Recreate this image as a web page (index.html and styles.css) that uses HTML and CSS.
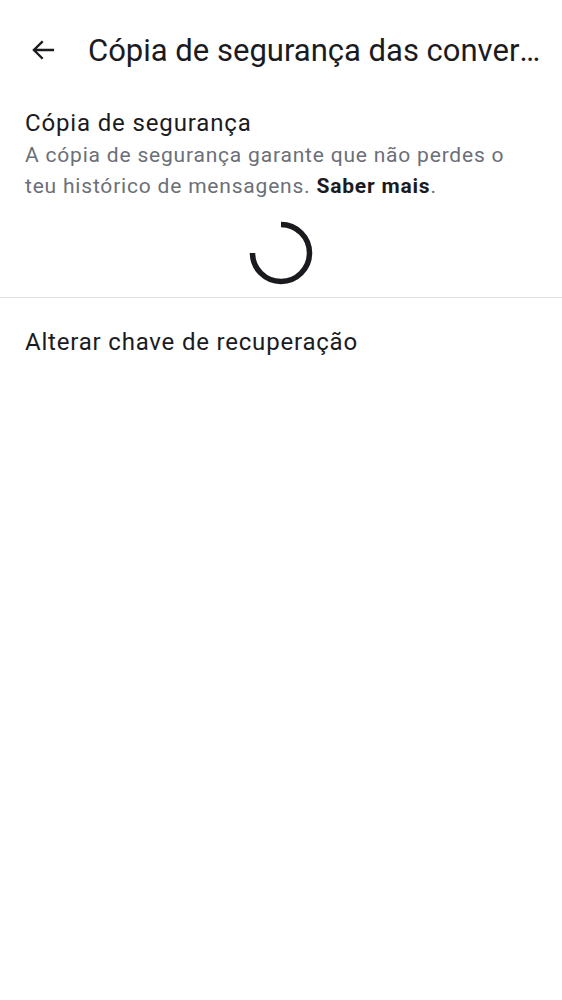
FILE: index.html
```html
<!DOCTYPE html>
<html lang="pt">
<head>
<meta charset="utf-8">
<link rel="stylesheet" href="styles.css">
</head>
<body>
<header class="appbar">
  <button class="back" aria-label="Voltar">
    <svg width="28" height="28" viewBox="0 0 24 24"><path d="M20.5 12H4.5M11 5.2 4.2 12l6.8 6.8" fill="none" stroke="#1b1b1f" stroke-width="2" stroke-linecap="square"/></svg>
  </button>
  <h1 class="title">Cópia de segurança das conversas</h1>
</header>
<section class="backup">
  <h2 class="item-title">Cópia de segurança</h2>
  <p class="item-desc">A cópia de segurança garante que não perdes o teu histórico de mensagens. <b class="learn">Saber mais</b>.</p>
  <div class="spinner-row">
    <svg class="spinner" width="64" height="64" viewBox="0 0 64 64"><path d="M32 3.5 A28.5 28.5 0 1 1 3.5 32" fill="none" stroke="#1b1b1f" stroke-width="5.5"/></svg>
  </div>
</section>
<div class="divider"></div>
<div class="row">Alterar chave de recuperação</div>
</body>
</html>
```
FILE: styles.css
```css
html, body { margin: 0; padding: 0; background: #fff; }
body { font-family: Roboto, "Noto Sans", sans-serif; color: #1b1b1f; width: 562px; }
.appbar { display: flex; align-items: center; height: 100px; padding-left: 29px; padding-right: 20px; box-sizing: border-box; }
.back { background: none; border: 0; padding: 0; width: 28px; height: 28px; display: flex; margin-right: 31px; }
.title { margin: 0; font-size: 31px; font-weight: 400; white-space: nowrap; overflow: hidden; text-overflow: ellipsis; flex: 1; min-width: 0; }
.backup { padding: 8px 25px 0; }
.item-title { margin: 0; font-size: 24px; font-weight: 400; line-height: 30px; letter-spacing: 0.85px; }
.item-desc { margin: 2px 0 0; max-width: 495px; font-size: 21px; line-height: 31px; color: #6b6f78; letter-spacing: 0.8px; }
.learn { color: #1b1b1f; font-weight: 700; }
.spinner-row { display: flex; justify-content: center; padding: 19px 0 12px; }
.divider { height: 1px; background: #e3e3e3; }
.row { padding: 28px 25px; font-size: 24px; line-height: 32px; letter-spacing: 0.8px; }
```
